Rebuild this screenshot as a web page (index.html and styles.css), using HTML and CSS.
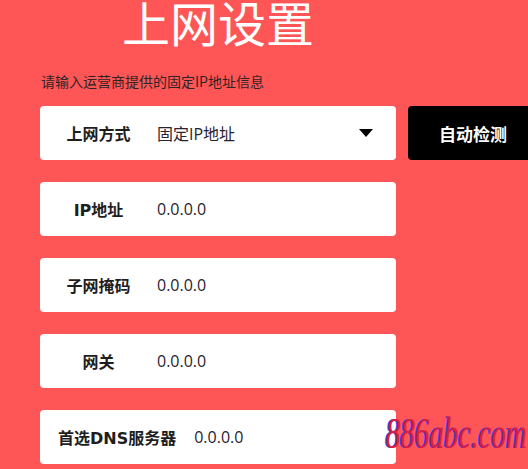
FILE: index.html
```html
<!DOCTYPE html>
<html lang="zh-CN">
<head>
    <meta charset="UTF-8">
    <meta name="viewport" content="width=device-width, initial-scale=1.0">
    <title>上网设置</title>
    <link rel="stylesheet" href="styles.css">
</head>
<body>
    <div class="page">
        <h1 class="title">上网设置</h1>
        <p class="hint">请输入运营商提供的固定IP地址信息</p>

        <div class="row">
            <div class="field select">
                <span class="label">上网方式</span>
                <span class="value">固定IP地址</span>
                <span class="caret"></span>
            </div>
            <button class="detect-btn">自动检测</button>
        </div>

        <div class="row">
            <div class="field">
                <span class="label">IP地址</span>
                <span class="value">0.0.0.0</span>
            </div>
        </div>

        <div class="row">
            <div class="field">
                <span class="label">子网掩码</span>
                <span class="value">0.0.0.0</span>
            </div>
        </div>

        <div class="row">
            <div class="field">
                <span class="label">网关</span>
                <span class="value">0.0.0.0</span>
            </div>
        </div>

        <div class="row">
            <div class="field">
                <span class="label">首选DNS服务器</span>
                <span class="value">0.0.0.0</span>
            </div>
        </div>
    </div>

    <div class="watermark">886abc.com</div>
</body>
</html>
```

FILE: styles.css
```css
html, body {
    margin: 0;
    padding: 0;
    height: 100%;
    overflow: hidden;
}
body {
    background: #fe5656;
    font-family: "Noto Sans CJK SC", "Noto Sans", sans-serif;
    position: relative;
}
.page {
    width: 356px;
    margin-left: 40px;
}
.title {
    margin: 0;
    font-size: 48px;
    line-height: 42px;
    font-weight: 400;
    color: #fff;
    text-align: center;
}
.hint {
    margin: 32px 0 0 1px;
    font-size: 14px;
    line-height: 15px;
    color: #2e2424;
}
.row {
    display: flex;
    margin-top: 22px;
    width: 496px;
}
.hint + .row {
    margin-top: 17px;
}
.field {
    width: 356px;
    height: 54px;
    flex: none;
    background: #fff;
    border-radius: 4px;
    display: flex;
    align-items: center;
}
.label {
    margin-left: 18px;
    min-width: 81px;
    text-align: center;
    font-family: "DejaVu Sans", "Noto Sans CJK SC", sans-serif;
    font-size: 16px;
    font-weight: 700;
    color: #1e1e1e;
    white-space: nowrap;
}
.value {
    margin-left: 18px;
    font-family: "Open Sans", "Noto Sans CJK SC", sans-serif;
    font-size: 16px;
    color: #2a2230;
}
.caret {
    margin-left: auto;
    margin-right: 23px;
    width: 0;
    height: 0;
    border-left: 7.5px solid transparent;
    border-right: 7.5px solid transparent;
    border-top: 8px solid #000;
}
.detect-btn {
    margin-left: 12px;
    width: 128px;
    height: 54px;
    flex: none;
    background: #000;
    color: #fff;
    border: none;
    border-radius: 4px;
    font-family: inherit;
    font-size: 17px;
    font-weight: 700;
    padding: 0 0 0 2px;
}
.watermark {
    position: absolute;
    left: 386px;
    top: 411px;
    font-family: "Liberation Serif", serif;
    font-style: italic;
    font-size: 29px;
    line-height: 1;
    color: #e01e3c;
    text-shadow: -1.5px 0 #4b3ee0;
    transform: scaleY(1.55);
    transform-origin: left top;
    white-space: nowrap;
}
```
